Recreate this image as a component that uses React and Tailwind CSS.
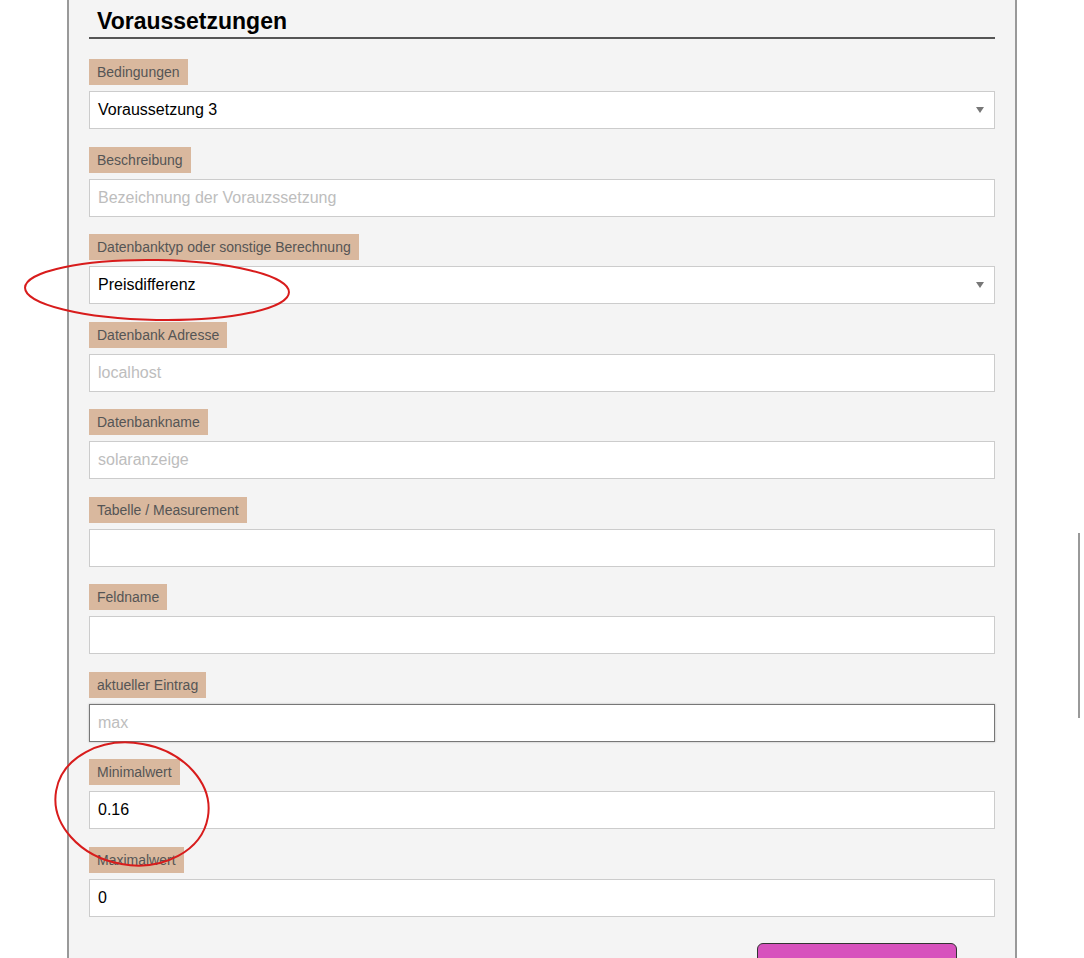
import React from 'react';

const fields = [
  { label: 'Bedingungen', value: 'Voraussetzung 3', select: true },
  { label: 'Beschreibung', placeholder: 'Bezeichnung der Vorauzssetzung' },
  { label: 'Datenbanktyp oder sonstige Berechnung', value: 'Preisdifferenz', select: true },
  { label: 'Datenbank Adresse', placeholder: 'localhost' },
  { label: 'Datenbankname', placeholder: 'solaranzeige' },
  { label: 'Tabelle / Measurement' },
  { label: 'Feldname' },
  { label: 'aktueller Eintrag', placeholder: 'max', focused: true },
  { label: 'Minimalwert', value: '0.16' },
  { label: 'Maximalwert', value: '0' },
];

function Field({ label, value, placeholder, select, focused }) {
  return (
    <div className="flex flex-col items-start mb-[17.5px]">
      <span className="bg-[#d9b89e] text-[#555] text-[14px] leading-[26px] h-[26px] px-2">{label}</span>
      <div
        className={`mt-[6px] w-full h-[38px] bg-white flex items-center justify-between pl-2 pr-[10px] border ${
          focused ? 'border-[#777] shadow-[0_0_2px_rgba(0,0,0,0.25)]' : 'border-[#cccccc]'
        }`}
      >
        {value ? (
          <span className="text-[16px] text-black">{value}</span>
        ) : (
          <span className="text-[16px] text-[#bdbdbd]">{placeholder || ''}</span>
        )}
        {select && (
          <span className="w-0 h-0 border-l-[4px] border-r-[4px] border-t-[6px] border-l-transparent border-r-transparent border-t-[#777]" />
        )}
      </div>
    </div>
  );
}

export default function App() {
  return (
    <div className="relative h-[958px] overflow-hidden bg-white font-['Liberation_Sans',Arial,sans-serif]">
      <div className="ml-[67px] w-[950px] min-h-[1000px] border-x-2 border-[#999] bg-[#f4f4f4] px-[20px] pt-[8px]">
        <h2 className="text-[23px] leading-[26px] font-bold text-black pl-2 pb-[3px] border-b-2 border-[#555]">
          Voraussetzungen
        </h2>
        <div className="mt-[20px]">
          {fields.map((f) => (
            <Field key={f.label} {...f} />
          ))}
        </div>
        <div className="flex justify-end pr-[38px] mt-[26px]">
          <button className="w-[200px] h-[40px] bg-[#d752bd] border border-[#333] rounded-[6px]" />
        </div>
      </div>

      {/* scrollbar remnant */}
      <div className="absolute left-[1078px] top-[533px] w-[2px] h-[185px] bg-[#999]" />

      {/* red annotation ellipses */}
      <svg className="absolute left-0 top-0 pointer-events-none" width="1084" height="958">
        <ellipse cx="157" cy="290" rx="132" ry="30" fill="none" stroke="#d81c1c" strokeWidth="2" transform="rotate(1 157 290)" />
        <ellipse cx="132" cy="804" rx="77" ry="61" fill="none" stroke="#d81c1c" strokeWidth="2" transform="rotate(10 132 804)" />
      </svg>
    </div>
  );
}
